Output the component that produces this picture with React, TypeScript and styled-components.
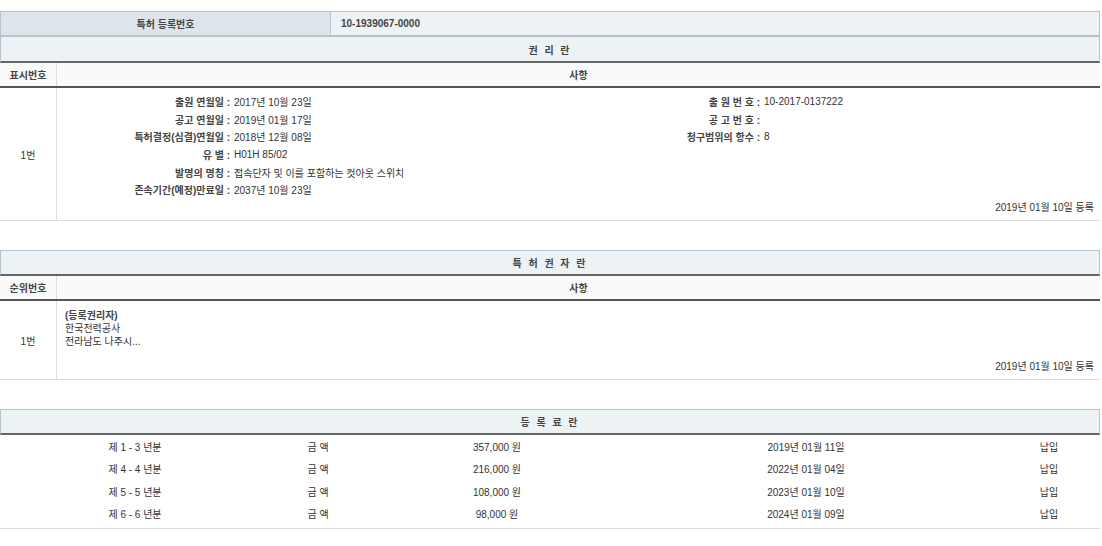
import React from "react";
import styled, { createGlobalStyle } from "styled-components";

const Global = createGlobalStyle`
  body { margin: 0; background: #fff; font-family: "Liberation Sans", "Noto Sans CJK KR", sans-serif; font-size: 10px; color: #333; }
  * { box-sizing: border-box; }
`;

const Page = styled.div`
  width: 1100px;
  padding-top: 11px;
`;

const Table = styled.div<{ $gap?: number }>`
  margin-bottom: ${(p) => p.$gap ?? 0}px;
  border-bottom: 1px solid #dcdcdc;
`;

const TopRow = styled.div`
  display: grid;
  grid-template-columns: 330px 1fr;
  height: 26px;
  border: 1px solid #b8c2cb;
  border-bottom: 2px solid #b8c2cb;
`;

const TopLabel = styled.div`
  background: #dde4ea;
  border-right: 1px solid #b8c2cb;
  display: flex;
  align-items: center;
  justify-content: center;
  font-weight: bold;
  color: #444;
`;

const TopValue = styled.div`
  background: #edf2f5;
  display: flex;
  align-items: center;
  padding-left: 10px;
  font-weight: bold;
  color: #444;
`;

const SectionHead = styled.div<{ $top?: boolean }>`
  height: 26px;
  background: #edf2f5;
  border: 1px solid #b8c2cb;
  border-top: ${(p) => (p.$top ? "none" : "1px solid #b8c2cb")};
  border-bottom: 2px solid #666;
  display: flex;
  align-items: center;
  justify-content: center;
  font-weight: bold;
  letter-spacing: 2px;
  color: #444;
`;

const ColHead = styled.div`
  display: grid;
  grid-template-columns: 57px 1fr;
  height: 25px;
  background: #fafafa;
  border-bottom: 2px solid #555;
  font-weight: bold;
  color: #444;
  & > div { display: flex; align-items: center; justify-content: center; }
  & > div:first-child { border-right: 1px solid #ddd; }
`;

const Body = styled.div<{ $h: number }>`
  display: grid;
  grid-template-columns: 57px 1fr;
  height: ${(p) => p.$h}px;
`;

const NumCell = styled.div`
  border-right: 1px solid #ddd;
  display: flex;
  align-items: center;
  justify-content: center;
`;

const Content = styled.div`
  position: relative;
  padding: 5px 6px 0 8px;
`;

const Fields = styled.div`
  display: grid;
  grid-template-columns: 600px 1fr;
`;

const FieldCol = styled.div<{ $lw: number }>`
  display: grid;
  grid-template-columns: ${(p) => p.$lw}px 1fr;
  grid-auto-rows: 17.6px;
  align-items: center;
`;

const Label = styled.div<{ $left?: boolean }>`
  text-align: ${(p) => (p.$left ? "left" : "right")};
  font-weight: bold;
  color: #444;
  white-space: nowrap;
`;

const Value = styled.div`
  white-space: nowrap;
  padding-left: 4px;
`;

const Reg = styled.div`
  position: absolute;
  right: 6px;
  bottom: 6px;
`;

const Lines = styled.div`
  line-height: 13px;
  padding-top: 3px;
`;

const FeeRow = styled.div`
  display: grid;
  grid-template-columns: 270px 96px 262px 356px 130px;
  height: 22.5px;
  align-items: center;
  text-align: center;
`;

const FeeBody = styled.div`
  padding: 0 0 3px;
`;

const left = [
  ["출원 연월일", "2017년 10월 23일"],
  ["공고 연월일", "2019년 01월 17일"],
  ["특허결정(심결)연월일", "2018년 12월 08일"],
  ["유 별", "H01H 85/02"],
  ["발명의 명칭", "접속단자 및 이를 포함하는 컷아웃 스위치"],
  ["존속기간(예정)만료일", "2037년 10월 23일"],
];
const right = [
  ["출 원 번 호", "10-2017-0137222"],
  ["공 고 번 호", ""],
  ["청구범위의 항수", "8"],
];
const fees = [
  ["제 1 - 3 년분", "357,000 원", "2019년 01월 11일"],
  ["제 4 - 4 년분", "216,000 원", "2022년 01월 04일"],
  ["제 5 - 5 년분", "108,000 원", "2023년 01월 10일"],
  ["제 6 - 6 년분", "98,000 원", "2024년 01월 09일"],
];

export default function App() {
  return (
    <Page>
      <Global />
      <Table $gap={29}>
        <TopRow>
          <TopLabel>특허 등록번호</TopLabel>
          <TopValue>10-1939067-0000</TopValue>
        </TopRow>
        <SectionHead $top>권 리 란</SectionHead>
        <ColHead><div>표시번호</div><div>사항</div></ColHead>
        <Body $h={132}>
          <NumCell>1번</NumCell>
          <Content>
            <Fields>
              <FieldCol $lw={165}>
                {left.map(([l, v]) => (
                  <React.Fragment key={l}>
                    <Label>{l} :</Label>
                    <Value>{v}</Value>
                  </React.Fragment>
                ))}
              </FieldCol>
              <FieldCol $lw={95}>
                {right.map(([l, v]) => (
                  <React.Fragment key={l}>
                    <Label>{l} :</Label>
                    <Value>{v}</Value>
                  </React.Fragment>
                ))}
              </FieldCol>
            </Fields>
            <Reg>2019년 01월 10일 등록</Reg>
          </Content>
        </Body>
      </Table>
      <Table $gap={29}>
        <SectionHead>특 허 권 자 란</SectionHead>
        <ColHead><div>순위번호</div><div>사항</div></ColHead>
        <Body $h={78}>
          <NumCell>1번</NumCell>
          <Content>
            <Lines>
              <Label $left>(등록권리자)</Label>
              <div>한국전력공사</div>
              <div>전라남도 나주시...</div>
            </Lines>
            <Reg>2019년 01월 10일 등록</Reg>
          </Content>
        </Body>
      </Table>
      <Table>
        <SectionHead>등 록 료 란</SectionHead>
        <FeeBody>
          {fees.map(([y, a, d]) => (
            <FeeRow key={y}>
              <div>{y}</div>
              <div>금 액</div>
              <div>{a}</div>
              <div>{d}</div>
              <div>납입</div>
            </FeeRow>
          ))}
        </FeeBody>
      </Table>
    </Page>
  );
}
